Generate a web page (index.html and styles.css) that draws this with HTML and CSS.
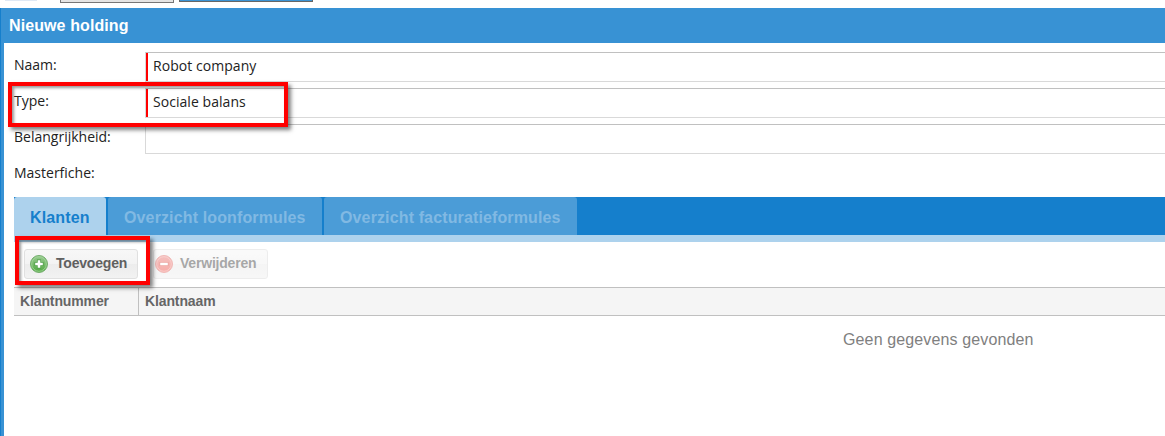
FILE: index.html
```html
<!DOCTYPE html>
<html lang="nl">
<head>
    <meta charset="UTF-8">
    <meta name="viewport" content="width=device-width, initial-scale=1.0">
    <title>Nieuwe holding</title>
    <link rel="stylesheet" href="styles.css">
</head>
<body>
    <div class="top-tabs">
        <div class="top-stub"></div>
        <div class="top-tab"></div>
        <div class="top-tab active"></div>
    </div>

    <div class="panel">
        <h1>Nieuwe holding</h1>

        <div class="panel-body">
            <div class="form-row">
                <label>Naam:</label>
                <div class="field required">Robot company</div>
            </div>
            <div class="form-row">
                <label>Type:</label>
                <div class="field required">Sociale balans</div>
                <div class="highlight highlight-type"></div>
            </div>
            <div class="form-row">
                <label>Belangrijkheid:</label>
                <div class="field"></div>
            </div>
            <div class="form-row">
                <label>Masterfiche:</label>
            </div>

            <div class="tabs">
                <div class="tab tab-klanten active">Klanten</div>
                <div class="tab tab-loon">Overzicht loonformules</div>
                <div class="tab tab-facturatie">Overzicht facturatieformules</div>
            </div>

            <div class="toolbar">
                <button class="button button-add">
                    <svg width="18" height="18" viewBox="0 0 18 18">
                        <defs>
                            <linearGradient id="green" x1="0" y1="0" x2="0" y2="1">
                                <stop offset="0" stop-color="#9acb92"/>
                                <stop offset="1" stop-color="#4fa83f"/>
                            </linearGradient>
                        </defs>
                        <circle cx="9" cy="9" r="8.5" fill="url(#green)" stroke="#73ad6c"/>
                        <circle cx="9" cy="9" r="7.3" fill="none" stroke="#a5d79c" stroke-width="0.8"/>
                        <path d="M9 4.5v9M4.5 9h9" stroke="#4d9c45" stroke-width="4"/>
                        <path d="M9 5.2v7.6M5.2 9h7.6" stroke="#fff" stroke-width="2.6"/>
                    </svg>
                    <span>Toevoegen</span>
                </button>
                <button class="button button-remove" disabled>
                    <svg width="18" height="18" viewBox="0 0 18 18">
                        <defs>
                            <linearGradient id="red" x1="0" y1="0" x2="0" y2="1">
                                <stop offset="0" stop-color="#ec8e8b"/>
                                <stop offset="1" stop-color="#f06a62"/>
                            </linearGradient>
                        </defs>
                        <circle cx="9" cy="9" r="8.5" fill="url(#red)" stroke="#e5817d"/>
                        <circle cx="9" cy="9" r="7.3" fill="none" stroke="#f6b1ad" stroke-width="0.8"/>
                        <path d="M4.5 9h9" stroke="#d9564f" stroke-width="4"/>
                        <path d="M5.2 9h7.6" stroke="#fff" stroke-width="2.6"/>
                    </svg>
                    <span>Verwijderen</span>
                </button>
                <div class="highlight highlight-add"></div>
            </div>

            <div class="grid-header">
                <div class="column column-nummer">Klantnummer</div>
                <div class="column">Klantnaam</div>
            </div>
            <div class="grid-empty">Geen gegevens gevonden</div>
        </div>
    </div>
</body>
</html>
```
FILE: styles.css
```css
* {
    box-sizing: border-box;
}

body {
    margin: 0;
    height: 436px;
    overflow: hidden;
    background-color: #fff;
    font-family: "Liberation Sans", Arial, sans-serif;
}

.top-tabs {
    display: flex;
    align-items: flex-start;
    height: 8px;
    padding-left: 5px;
}

.top-stub {
    width: 32px;
    height: 1px;
    margin-right: 23px;
    background-color: #dfe9f5;
}

.top-tab {
    width: 114px;
    height: 3px;
    margin-right: 5px;
    background-color: #e4e4e4;
    border: 1px solid #777;
    border-top: none;
}

.top-tab.active {
    width: 134px;
    height: 2px;
    background-color: #3892d4;
    border-color: #666;
}

.panel {
    height: 428px;
    border-left: 1px solid #157fcc;
}

h1 {
    height: 35px;
    margin: 0;
    padding-left: 8px;
    background-color: #3892d4;
    color: #fff;
    font-size: 16px;
    letter-spacing: 0.1px;
    line-height: 35px;
}

.panel-body {
    height: 393px;
    padding: 9px 0 0 10px;
    border-left: 3px solid #3892d4;
}

.form-row {
    position: relative;
    display: flex;
    height: 36px;
    font-family: "Open Sans", Tahoma, sans-serif;
    font-size: 14px;
    color: #222;
}

.form-row label {
    width: 131px;
    line-height: 26px;
    white-space: nowrap;
}

.field {
    flex: 1;
    height: 30px;
    padding-left: 7px;
    border: 1px solid #d9d9d9;
    border-top-color: #c0c0c0;
    border-right: none;
    letter-spacing: 0.05px;
    line-height: 26px;
}

.field.required {
    background: linear-gradient(#f00, #f00) left / 2px 100% no-repeat;
}

.highlight {
    position: absolute;
    z-index: 1;
    border: 4px solid #f00;
    box-shadow: 3px 3px 4px rgba(0, 0, 0, 0.5), inset 2px 2px 3px rgba(0, 0, 0, 0.4);
}

.highlight-type {
    left: -6px;
    top: -6px;
    width: 280px;
    height: 45px;
}

.tabs {
    display: flex;
    gap: 2px;
    height: 45px;
    margin-top: 1px;
    background-color: #157fcc;
    border-bottom: 7px solid #add2ed;
}

.tab {
    padding-left: 16px;
    border-radius: 3px 3px 0 0;
    background-color: #4b9cd7;
    color: #81b9e3;
    font-size: 16px;
    font-weight: bold;
    letter-spacing: 0.13px;
    line-height: 41px;
    white-space: nowrap;
}

.tab.active {
    background-color: #add2ed;
    color: #157fcc;
}

.tab-klanten {
    width: 92px;
}

.tab-loon {
    width: 214px;
}

.tab-facturatie {
    width: 253px;
}

.toolbar {
    position: relative;
    display: flex;
    gap: 15px;
    height: 45px;
    padding: 7px 0 0 10px;
}

.button {
    display: flex;
    align-items: center;
    gap: 8px;
    height: 30px;
    padding: 0 0 0 5px;
    border: 1px solid #e0e0e0;
    border-radius: 3px;
    background: linear-gradient(#f7f7f7, #f3f3f3 50%, #ececec 50%, #f2f2f2);
    color: #606060;
    font: bold 14px "Liberation Sans", Arial, sans-serif;
    letter-spacing: -0.2px;
    white-space: nowrap;
}

.button-add {
    width: 114px;
}

.button-remove {
    gap: 7px;
    width: 115px;
    padding-left: 1px;
    opacity: 0.55;
}

.button span {
    position: relative;
    top: -1px;
}

.highlight-add {
    left: 1px;
    top: -6px;
    width: 135px;
    height: 49px;
}

.grid-header {
    display: flex;
    height: 29px;
    background-color: #f5f5f5;
    border-top: 1px solid #c0c0c0;
    border-bottom: 1px solid #c0c0c0;
}

.column {
    padding-left: 6px;
    color: #666;
    font-size: 14px;
    font-weight: bold;
    letter-spacing: -0.12px;
    line-height: 27px;
}

.column-nummer {
    width: 125px;
    border-right: 1px solid #c0c0c0;
}

.grid-empty {
    padding: 10px 0 0 829px;
    color: #808080;
    font-size: 16px;
    letter-spacing: 0.13px;
    line-height: 27px;
    white-space: nowrap;
}
```
